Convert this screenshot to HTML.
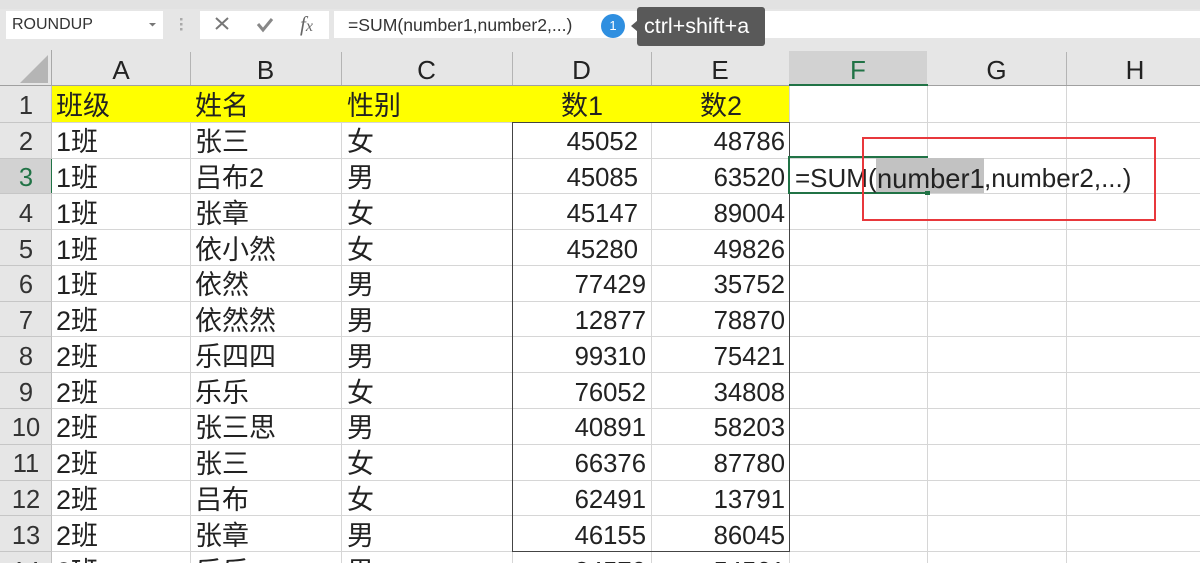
<!DOCTYPE html>
<html lang="zh"><head><meta charset="utf-8"><title>Excel</title>
<style>
html,body{margin:0;padding:0;width:1200px;height:563px;overflow:hidden;background:#fff}
body{position:relative;font-family:"Liberation Sans","Noto Sans CJK SC",sans-serif;color:#222}
div,span{position:absolute;box-sizing:border-box}
.r{left:0;width:1200px;height:36px;font-size:26px;line-height:41px;white-space:nowrap}
.r span{top:0}
.r.last{height:11px;overflow:hidden}
.r.last span{height:11px;overflow:hidden}
.n{left:0;width:52px;text-align:center;padding-right:0;color:#333;font-size:25.500px}
.a{left:56px;font-size:27px}.b{left:195px;font-size:27px}.c{left:347px;font-size:27px}
.d{right:562px;font-size:25.700px}.d2{right:554px;font-size:25.700px}.e{right:415px;font-size:25.700px}
.h{top:51px;height:34px;font-size:26px;line-height:38px;text-align:center;color:#222}
.v{top:86px;width:1px;height:477px;background:#d6d6d6}
.l{left:52px;width:1148px;height:1px;background:#d6d6d6}
.rl{left:0;width:52px;height:1px;background:#c6c6c6}
.s{top:52px;width:1px;height:33px;background:#b4b4b4}
</style></head><body>
<div style="left:0;top:0;width:1200px;height:563px;overflow:hidden">
<div style="left:0;top:0;width:1200px;height:86px;background:#e6e6e6"></div>
<div style="left:0;top:0;width:1200px;height:9px;background:#e2e2e2"></div>
<div style="left:6px;top:11px;width:157px;height:28px;background:#fff;font-size:16px;line-height:28px;padding-left:6px;color:#333">ROUNDUP</div>
<svg style="position:absolute;left:0;top:0" width="340" height="50">
<path d="M149 23h7l-3.500 3.500z" fill="#777"/>
<g fill="#aaa"><rect x="180" y="18" width="2.500" height="2.500"/><rect x="180" y="23" width="2.500" height="2.500"/><rect x="180" y="28" width="2.500" height="2.500"/></g>
</svg>
<div style="left:200px;top:11px;width:129px;height:28px;background:#fff"></div>
<svg style="position:absolute;left:200px;top:11px" width="129" height="28">
<path d="M16 7L28 18M28 7L16 18" stroke="#777" stroke-width="2" fill="none"/>
<path d="M58 13L63 19L72 8" stroke="#888" stroke-width="3" fill="none"/>
<text x="100" y="20" font-family="Liberation Serif" font-style="italic" font-size="21" fill="#666">f<tspan font-size="16">x</tspan></text>
</svg>
<div style="left:334px;top:11px;width:866px;height:27px;background:#fff"></div>
<div style="left:348px;top:11px;height:28px;font-size:17.600px;line-height:28px;white-space:nowrap;color:#333">=SUM(number1,number2,...)</div>
<div style="left:601px;top:14px;width:24px;height:24px;border-radius:50%;background:#2f8fe0;color:#fff;font-size:13px;line-height:24px;text-align:center">1</div>
<div style="left:637px;top:7px;width:128px;height:39px;border-radius:3px;background:#595959;color:#fff;font-size:21.500px;line-height:39px;padding-left:7px;white-space:nowrap">ctrl+shift+a</div>
<svg style="position:absolute;left:630px;top:19px" width="8" height="14"><path d="M8 1L1 7L8 13z" fill="#595959"/></svg>

<svg style="position:absolute;left:0;top:50px" width="52" height="36"><path d="M20 33L48 5V33z" fill="#b5b5b5"/></svg>
<div style="left:789px;top:51px;width:138px;height:35px;background:#d2d2d2"></div>
<div class="h" style="left:52px;width:138px">A</div>
<div class="h" style="left:190px;width:151px">B</div>
<div class="h" style="left:341px;width:171px">C</div>
<div class="h" style="left:512px;width:139px">D</div>
<div class="h" style="left:651px;width:138px">E</div>
<div class="h" style="left:789px;width:138px;color:#217346">F</div>
<div class="h" style="left:927px;width:139px">G</div>
<div class="h" style="left:1066px;width:134px;padding-left:4px;overflow:hidden">H</div>
<div class="s" style="left:190px"></div><div class="s" style="left:341px"></div><div class="s" style="left:512px"></div><div class="s" style="left:651px"></div><div class="s" style="left:1066px"></div>
<div style="left:0;top:85px;width:1200px;height:1px;background:#a0a0a0"></div>
<div style="left:789px;top:84px;width:139px;height:2px;background:#217346"></div>

<div style="left:0;top:86px;width:52px;height:477px;background:#e6e6e6"></div>
<div style="left:0;top:158px;width:51px;height:35px;background:#d2d2d2"></div>
<div style="left:51px;top:50px;width:1px;height:36px;background:#a8a8a8"></div>
<div style="left:51px;top:86px;width:1px;height:477px;background:#c0c0c0"></div>
<div style="left:51px;top:158px;width:1px;height:35px;background:#217346"></div>

<div class="v" style="left:190px"></div><div class="v" style="left:341px"></div><div class="v" style="left:512px"></div><div class="v" style="left:651px"></div><div class="v" style="left:789px"></div><div class="v" style="left:927px"></div><div class="v" style="left:1066px"></div>
<div style="left:52px;top:86px;width:737px;height:36px;background:#ffff00"></div>
<div class="l" style="top:122px"></div><div class="l" style="top:158px"></div><div class="l" style="top:193px"></div><div class="l" style="top:229px"></div><div class="l" style="top:265px"></div><div class="l" style="top:301px"></div><div class="l" style="top:336px"></div><div class="l" style="top:372px"></div><div class="l" style="top:408px"></div><div class="l" style="top:444px"></div><div class="l" style="top:480px"></div><div class="l" style="top:515px"></div><div class="l" style="top:551px"></div>
<div class="rl" style="top:122px"></div><div class="rl" style="top:158px"></div><div class="rl" style="top:193px"></div><div class="rl" style="top:229px"></div><div class="rl" style="top:265px"></div><div class="rl" style="top:301px"></div><div class="rl" style="top:336px"></div><div class="rl" style="top:372px"></div><div class="rl" style="top:408px"></div><div class="rl" style="top:444px"></div><div class="rl" style="top:480px"></div><div class="rl" style="top:515px"></div><div class="rl" style="top:551px"></div>

<div class="r" style="top:86px"><span class="n">1</span><span class="a">班级</span><span class="b">姓名</span><span class="c">性别</span><span style="left:561px;font-size:27px">数1</span><span style="left:700px;font-size:27px">数2</span></div>
<div class="r" style="top:122px"><span class="n">2</span><span class="a">1班</span><span class="b">张三</span><span class="c">女</span><span class="d">45052</span><span class="e">48786</span></div>
<div class="r" style="top:158px"><span class="n" style="color:#217346">3</span><span class="a">1班</span><span class="b">吕布2</span><span class="c">男</span><span class="d">45085</span><span class="e">63520</span></div>
<div class="r" style="top:194px"><span class="n">4</span><span class="a">1班</span><span class="b">张章</span><span class="c">女</span><span class="d">45147</span><span class="e">89004</span></div>
<div class="r" style="top:230px"><span class="n">5</span><span class="a">1班</span><span class="b">依小然</span><span class="c">女</span><span class="d">45280</span><span class="e">49826</span></div>
<div class="r" style="top:265px"><span class="n">6</span><span class="a">1班</span><span class="b">依然</span><span class="c">男</span><span class="d2">77429</span><span class="e">35752</span></div>
<div class="r" style="top:301px"><span class="n">7</span><span class="a">2班</span><span class="b">依然然</span><span class="c">男</span><span class="d2">12877</span><span class="e">78870</span></div>
<div class="r" style="top:337px"><span class="n">8</span><span class="a">2班</span><span class="b">乐四四</span><span class="c">男</span><span class="d2">99310</span><span class="e">75421</span></div>
<div class="r" style="top:373px"><span class="n">9</span><span class="a">2班</span><span class="b">乐乐</span><span class="c">女</span><span class="d2">76052</span><span class="e">34808</span></div>
<div class="r" style="top:408px"><span class="n">10</span><span class="a">2班</span><span class="b">张三思</span><span class="c">男</span><span class="d2">40891</span><span class="e">58203</span></div>
<div class="r" style="top:444px"><span class="n">11</span><span class="a">2班</span><span class="b">张三</span><span class="c">女</span><span class="d2">66376</span><span class="e">87780</span></div>
<div class="r" style="top:480px"><span class="n">12</span><span class="a">2班</span><span class="b">吕布</span><span class="c">女</span><span class="d2">62491</span><span class="e">13791</span></div>
<div class="r" style="top:516px"><span class="n">13</span><span class="a">2班</span><span class="b">张章</span><span class="c">男</span><span class="d2">46155</span><span class="e">86045</span></div>
<div class="r last" style="top:552px"><span class="n">14</span><span class="a">2班</span><span class="b">乐乐</span><span class="c">男</span><span class="d2">84570</span><span class="e">54561</span></div>

<div style="left:512px;top:122px;width:278px;height:430px;border:1.500px solid #444"></div>

<div style="left:876px;top:158px;width:108px;height:35px;background:#c2c2c2"></div>
<div style="left:788px;top:156px;width:140px;height:38px;border:2px solid #217346;border-right:0"></div>
<div style="left:925px;top:191px;width:5px;height:4px;background:#217346"></div>
<div class="r" style="top:158px;left:0;width:1200px"><span style="left:795px">=SUM(</span><span style="left:877px;font-size:27.300px">number1</span><span style="left:984px">,number2,...)</span></div>
<div style="left:862px;top:137px;width:294px;height:84px;border:2px solid #e8383c"></div>
</div>
</body></html>
